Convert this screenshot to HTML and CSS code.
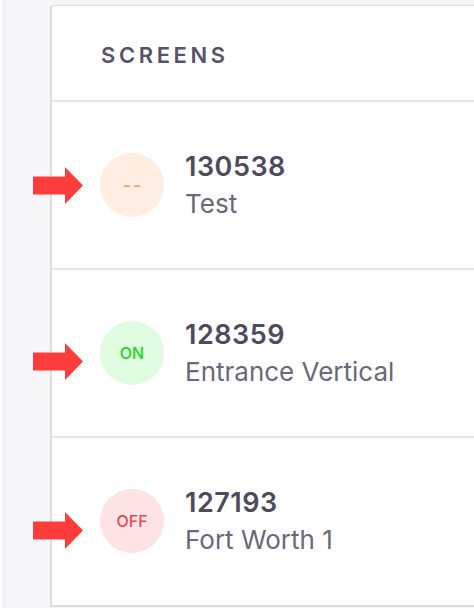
FILE: index.html
```html
<!DOCTYPE html>
<html>
<head>
<meta charset="utf-8">
<link rel="stylesheet" href="styles.css">
</head>
<body>
<div class="page">
  <div class="edge"></div>
  <section class="card">
    <header class="card-head"><h2 class="title">SCREENS</h2></header>
    <div class="row">
      <div class="badge badge-unknown">--</div>
      <div class="info"><div class="id">130538</div><div class="name">Test</div></div>
    </div>
    <div class="row">
      <div class="badge badge-on">ON</div>
      <div class="info"><div class="id">128359</div><div class="name">Entrance Vertical</div></div>
    </div>
    <div class="row">
      <div class="badge badge-off">OFF</div>
      <div class="info"><div class="id">127193</div><div class="name">Fort Worth 1</div></div>
    </div>
  </section>
  <svg class="arrow arrow-1" viewBox="0 0 50 37"><polygon points="0,9.5 32,9.5 32,0 50,18.5 32,37 32,27.5 0,27.5"/></svg>
  <svg class="arrow arrow-2" viewBox="0 0 50 37"><polygon points="0,9.5 32,9.5 32,0 50,18.5 32,37 32,27.5 0,27.5"/></svg>
  <svg class="arrow arrow-3" viewBox="0 0 50 37"><polygon points="0,9.5 32,9.5 32,0 50,18.5 32,37 32,27.5 0,27.5"/></svg>
</div>
</body>
</html>
```
FILE: styles.css
```css
html, body {
  margin: 0;
  padding: 0;
  background: #f6f6f8;
  font-family: Inter, "Noto Sans", sans-serif;
  overflow: hidden;
}
.page {
  position: relative;
  width: 474px;
  height: 608px;
  display: flex;
  overflow: hidden;
}
.edge {
  width: 8px;
  flex: none;
  background: linear-gradient(to right, #fdfdfe 0, #fdfdfe 2px, #efeff2 3px, #f6f6f8 8px);
}
.card {
  margin-left: 42px;
  margin-top: 5px;
  width: 520px;
  flex: none;
  height: 599px;
  background: #fff;
  border: 2px solid #dcdce0;
  border-right: none;
  border-top-width: 1px;
  border-top-left-radius: 3px;
  display: flex;
  flex-direction: column;
}
.card-head {
  height: 96px;
  flex: none;
  border-bottom: 2px solid #e6e6e9;
  display: flex;
  align-items: center;
  padding-left: 49px;
  box-sizing: border-box;
}
.title {
  margin: 0;
  font-size: 22px;
  font-weight: 600;
  letter-spacing: 3.6px;
  color: #57536a;
  padding-top: 4px;
}
.row {
  height: 168px;
  flex: none;
  box-sizing: border-box;
  border-bottom: 2px solid #e6e6e9;
  display: flex;
  align-items: center;
  padding-left: 48px;
  gap: 21px;
}
.row:last-child { border-bottom: none; height: 166px; }
.badge {
  width: 64px;
  height: 64px;
  border-radius: 50%;
  display: flex;
  align-items: center;
  justify-content: center;
  font-size: 16px;
  font-weight: 500;
  flex: none;
}
.badge-unknown { background: #ffeee1; color: #f8a24e; letter-spacing: 2px; padding-left: 2px; box-sizing: border-box; font-size: 18px; }
.badge-on { background: #e0fce0; color: #1bd81b; }
.badge-off { background: #fde3e4; color: #e5484f; }
.info {
  display: flex;
  flex-direction: column;
  gap: 6px;
  margin-top: -1px;
}
.id {
  font-size: 27px;
  font-weight: 600;
  color: #4e4b5b;
  line-height: 32px;
  letter-spacing: 0.5px;
}
.name {
  font-size: 26px;
  font-weight: 400;
  color: #6b6879;
  line-height: 30px;
}
.arrow {
  position: absolute;
  left: 33px;
  width: 50px;
  height: 37px;
  fill: #ff3c3c;
}
.arrow-1 { top: 167px; }
.arrow-2 { top: 343px; }
.arrow-3 { top: 512px; }
```
